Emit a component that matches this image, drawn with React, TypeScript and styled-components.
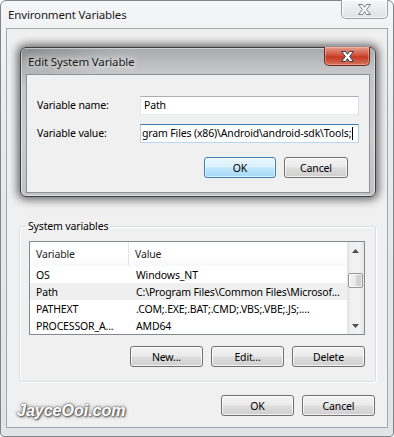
import React from 'react';
import styled, { createGlobalStyle, css } from 'styled-components';

const GlobalStyle = createGlobalStyle`
  html, body {
    margin: 0;
    padding: 0;
    background: #ffffff;
  }
  body {
    font-family: "Noto Sans", "Segoe UI", sans-serif;
    font-size: 11px;
    color: #000;
  }
  * {
    box-sizing: border-box;
  }
`;

// Segoe UI 9pt is narrower than Noto Sans, so squeeze a little
const uiFont = css`
  font-family: "Noto Sans", "Segoe UI", sans-serif;
  font-size: 10.5px;
  letter-spacing: -0.15px;
`;

const Window = styled.div`
  width: 394px;
  height: 437px;
  display: flex;
  flex-direction: column;
  border: 1px solid #80858a;
  border-radius: 6px 6px 4px 4px;
  background: linear-gradient(to bottom, #f4f5f6 0%, #e8eaed 30%, #e2e5e8 100%);
  padding: 0 5px 8px 5px;
`;

const TitleBar = styled.div`
  height: 27px;
  display: flex;
  justify-content: space-between;
  align-items: flex-start;
`;

const Title = styled.span<{ $glow?: boolean }>`
  ${uiFont};
  font-size: 11.5px;
  line-height: 16px;
  padding: 6px 0 0 2px;
  color: #1a1a1a;
  ${p =>
    p.$glow &&
    css`
      text-shadow: 0 0 6px rgba(255, 255, 255, 0.95), 0 0 10px rgba(255, 255, 255, 0.8);
    `}
`;

const CloseButton = styled.div<{ $active?: boolean }>`
  width: ${p => (p.$active ? 46 : 47)}px;
  height: 19px;
  margin-top: -1px;
  display: flex;
  align-items: center;
  justify-content: center;
  border: 1px solid ${p => (p.$active ? '#6b2a22' : '#9aa0a6')};
  border-top: none;
  border-radius: 0 0 5px 5px;
  background: ${p =>
    p.$active
      ? 'linear-gradient(to bottom, #e6a08f 0%, #d1533c 45%, #c33a22 55%, #d8735c 100%)'
      : 'linear-gradient(to bottom, #f6f7f8 0%, #e9ebed 50%, #dfe2e5 100%)'};
  box-shadow: inset 0 0 0 1px ${p => (p.$active ? 'rgba(255,200,190,0.45)' : 'rgba(255,255,255,0.8)')};
`;

const Client = styled.div`
  flex: 1;
  display: flex;
  flex-direction: column;
  background: #f0f0f0;
  border: 1px solid #a2a7ad;
`;

const Dialog = styled.div`
  margin: 18px 0 0 13px;
  width: 356px;
  height: 150px;
  display: flex;
  flex-direction: column;
  border: 1px solid #3f3f3f;
  border-radius: 6px;
  padding: 0 5px 3px 5px;
  background:
    radial-gradient(ellipse 90px 40px at 0 0, rgba(80, 80, 80, 0.35), rgba(80, 80, 80, 0) 100%),
    linear-gradient(to bottom, #a8aaac 0%, #c3c5c7 22px, #c9cbcd 60%, #c1c3c5 100%);
  box-shadow: 0 0 8px 3px rgba(0, 0, 0, 0.55), inset 0 0 0 1px rgba(255, 255, 255, 0.45);
`;

const DialogTitleBar = styled(TitleBar)`
  height: 26px;
`;

const DialogClient = styled.div`
  flex: 1;
  background: #f0f0f0;
  border: 1px solid #8d9196;
  padding: 21px 21px 0 10px;
`;

const FormGrid = styled.div`
  display: grid;
  grid-template-columns: 103px 219px;
  grid-auto-rows: 19px;
  row-gap: 9px;
  align-items: center;
`;

const Label = styled.label`
  ${uiFont};
  line-height: 19px;
`;

const TextBox = styled.div<{ $focused?: boolean }>`
  ${uiFont};
  height: 19px;
  line-height: 17px;
  padding: 0 3px;
  background: #fff;
  white-space: nowrap;
  overflow: hidden;
  display: flex;
  align-items: center;
  border: 1px solid;
  border-color: ${p => (p.$focused ? '#3d7bad #a4c9e3 #b7d9ed #b5cfe7' : '#abadb3 #dbdfe6 #e3e9ef #e2e3ea')};
`;

const ScrolledText = styled.span`
  margin-left: -2px;
`;

const Caret = styled.span`
  display: inline-block;
  flex-shrink: 0;
  width: 1px;
  height: 13px;
  background: #000;
  margin-left: 1px;
`;

const ButtonRow = styled.div<{ $top: number }>`
  display: flex;
  justify-content: flex-end;
  gap: 8px;
  margin-top: ${p => p.$top}px;
`;

const Button = styled.button<{ $w: number; $default?: boolean }>`
  ${uiFont};
  width: ${p => p.$w}px;
  height: 21px;
  padding: 0;
  color: #000;
  border: 1px solid #707070;
  border-radius: 3px;
  background: linear-gradient(to bottom, #f2f2f2 0%, #ebebeb 48%, #dddddd 52%, #cfcfcf 100%);
  box-shadow: inset 0 0 0 1px rgba(255, 255, 255, 0.75);
  ${p =>
    p.$default &&
    css`
      border-color: #3c7fb1;
      background: linear-gradient(to bottom, #eaf6fd 0%, #d9f0fc 48%, #bee6fd 52%, #a7d9f5 100%);
      box-shadow: inset 0 0 0 1px rgba(255, 255, 255, 0.6);
    `}
`;

const GroupBox = styled.fieldset`
  margin: 21px 0 0 12px;
  width: 357px;
  height: 164px;
  border: 1px solid #d5dfe5;
  border-radius: 3px;
  padding: 0 10px 0 9px;
  min-width: 0;
  box-shadow: inset 1px 1px 0 #fff, 1px 1px 0 #fff;
`;

const Legend = styled.legend`
  ${uiFont};
  line-height: 16px;
  padding: 0 2px;
  margin-left: -3px;
`;

const ListBox = styled.div`
  margin-top: 7px;
  height: 94px;
  border: 1px solid #828790;
  background: #fff;
  display: flex;
  overflow: hidden;
`;

const Table = styled.div`
  flex: 1;
  display: flex;
  flex-direction: column;
  min-width: 0;
`;

const HeaderRow = styled.div`
  height: 24px;
  display: flex;
  align-items: center;
  background: linear-gradient(to bottom, #ffffff 0%, #ffffff 60%, #f7f8f9 100%);
`;

const HeaderCell = styled.div<{ $w?: number }>`
  ${uiFont};
  color: #1e1e1e;
  height: 100%;
  display: flex;
  align-items: center;
  padding-left: 6px;
  ${p =>
    p.$w
      ? css`
          width: ${p.$w}px;
          border-right: 1px solid #e5e5e5;
        `
      : css`
          flex: 1;
        `}
`;

const Row = styled.div<{ $hover?: boolean }>`
  height: 17px;
  display: flex;
  align-items: center;
  background: ${p => (p.$hover ? '#efefef' : 'transparent')};
`;

const Cell = styled.div<{ $w?: number }>`
  ${uiFont};
  padding-left: 6px;
  white-space: nowrap;
  overflow: hidden;
  ${p =>
    p.$w
      ? css`
          width: ${p.$w}px;
          flex-shrink: 0;
        `
      : css`
          flex: 1;
          min-width: 0;
        `}
`;

const ScrollBar = styled.div`
  width: 17px;
  display: flex;
  flex-direction: column;
  background: linear-gradient(to right, #e2e2e2 0%, #f0f0f0 25%, #f2f2f2 75%, #e6e6e6 100%);
`;

const ArrowBox = styled.div`
  height: 17px;
  display: flex;
  align-items: center;
  justify-content: center;
`;

const Track = styled.div`
  flex: 1;
  padding: 14px 1px 0 1px;
`;

const Thumb = styled.div`
  height: 15px;
  border: 1px solid #979797;
  border-radius: 2px;
  background: linear-gradient(to right, #f3f3f3 0%, #e8e8e8 50%, #d9d9d9 50%, #cbcbcb 100%);
  box-shadow: inset 0 0 0 1px rgba(255, 255, 255, 0.7);
`;

const Footer = styled.div`
  display: flex;
  justify-content: space-between;
  align-items: flex-start;
  margin-top: 13px;
  padding: 0 12px 0 10px;
`;

const Watermark = styled.span`
  font-family: "Liberation Sans", Arial, sans-serif;
  font-weight: bold;
  font-style: italic;
  font-size: 16px;
  line-height: 18px;
  margin-top: 7px;
  color: #ffffff;
  text-shadow: 0 0 2px #4a4a4a, 1px 1px 2px #5a5a5a, 0 0 4px #888;
`;

const CloseGlyph: React.FC<{ active?: boolean }> = ({ active }) => (
  <svg width="13" height="11" viewBox="0 0 13 11">
    <path
      d="M0.5 0.5 H4.5 L6.5 3.3 L8.5 0.5 H12.5 L8.6 5.5 L12.5 10.5 H8.5 L6.5 7.7 L4.5 10.5 H0.5 L4.4 5.5 Z"
      fill={active ? '#ffffff' : '#f7f8f9'}
      stroke={active ? '#3b3a52' : '#7b8087'}
      strokeWidth="1"
      strokeLinejoin="round"
    />
  </svg>
);

const Arrow: React.FC<{ down?: boolean }> = ({ down }) => (
  <svg width="7" height="4" viewBox="0 0 7 4">
    <path d={down ? 'M0 0 H7 L3.5 4 Z' : 'M0 4 H7 L3.5 0 Z'} fill="#4d4d4d" />
  </svg>
);

const variables = [
  { name: 'OS', value: 'Windows_NT' },
  { name: 'Path', value: 'C:\\Program Files\\Common Files\\Microsof...', hover: true },
  { name: 'PATHEXT', value: '.COM;.EXE;.BAT;.CMD;.VBS;.VBE;.JS;....' },
  { name: 'PROCESSOR_A...', value: 'AMD64' },
];

const App: React.FC = () => {
  return (
    <>
      <GlobalStyle />
      <Window>
        <TitleBar>
          <Title>Environment Variables</Title>
          <CloseButton>
            <CloseGlyph />
          </CloseButton>
        </TitleBar>
        <Client>
          <Dialog>
            <DialogTitleBar>
              <Title $glow>Edit System Variable</Title>
              <CloseButton $active>
                <CloseGlyph active />
              </CloseButton>
            </DialogTitleBar>
            <DialogClient>
              <FormGrid>
                <Label>Variable name:</Label>
                <TextBox>Path</TextBox>
                <Label>Variable value:</Label>
                <TextBox $focused>
                  <ScrolledText>gram Files (x86)\Android\android-sdk\Tools;</ScrolledText>
                  <Caret />
                </TextBox>
              </FormGrid>
              <ButtonRow $top={14}>
                <Button $w={72} $default>OK</Button>
                <Button $w={64}>Cancel</Button>
              </ButtonRow>
            </DialogClient>
          </Dialog>

          <GroupBox>
            <Legend>System variables</Legend>
            <ListBox>
              <Table>
                <HeaderRow>
                  <HeaderCell $w={99}>Variable</HeaderCell>
                  <HeaderCell>Value</HeaderCell>
                </HeaderRow>
                {variables.map(v => (
                  <Row key={v.name} $hover={v.hover}>
                    <Cell $w={100}>{v.name}</Cell>
                    <Cell>{v.value}</Cell>
                  </Row>
                ))}
              </Table>
              <ScrollBar>
                <ArrowBox>
                  <Arrow />
                </ArrowBox>
                <Track>
                  <Thumb />
                </Track>
                <ArrowBox>
                  <Arrow down />
                </ArrowBox>
              </ScrollBar>
            </ListBox>
            <ButtonRow $top={11}>
              <Button $w={73}>New...</Button>
              <Button $w={73}>Edit...</Button>
              <Button $w={73}>Delete</Button>
            </ButtonRow>
          </GroupBox>

          <Footer>
            <Watermark>JayceOoi.com</Watermark>
            <ButtonRow $top={0}>
              <Button $w={73}>OK</Button>
              <Button $w={73}>Cancel</Button>
            </ButtonRow>
          </Footer>
        </Client>
      </Window>
    </>
  );
};

export default App;
